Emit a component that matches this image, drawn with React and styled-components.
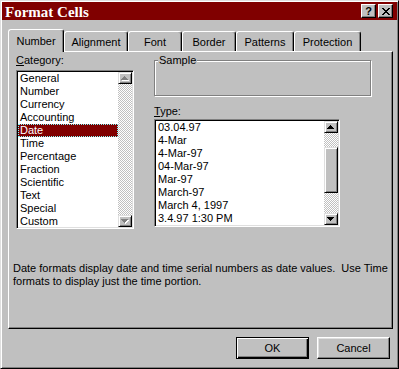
import React from 'react';
import styled, { createGlobalStyle, css } from 'styled-components';

const GlobalStyle = createGlobalStyle`
  html, body {
    margin: 0;
    padding: 0;
    background: #c0c0c0;
  }
  body {
    font-family: "Liberation Sans", Arial, sans-serif;
    font-size: 11px;
    color: #000;
  }
  * {
    box-sizing: border-box;
  }
`;

const raised = css`
  border: 1px solid;
  border-color: #dfdfdf #000 #000 #dfdfdf;
  box-shadow: inset 1px 1px #fff, inset -1px -1px #808080;
`;

const Window = styled.div`
  width: 399px;
  height: 369px;
  padding: 1px;
  background: #c0c0c0;
  display: flex;
  flex-direction: column;
  ${raised}
`;

const TitleBar = styled.div`
  height: 18px;
  background: #800000;
  display: flex;
  align-items: center;
  padding: 0 4px 0 3px;
`;

const Title = styled.div`
  flex: 1;
  color: #fff;
  font-family: "Liberation Serif", "Times New Roman", serif;
  font-weight: bold;
  font-size: 15px;
  line-height: 18px;
  padding-top: 1px;
`;

const CaptionButtons = styled.div`
  display: flex;
  gap: 2px;
`;

const CaptionButton = styled.div`
  width: 15px;
  height: 14px;
  background: #c0c0c0;
  display: flex;
  align-items: center;
  justify-content: center;
  font-family: "Liberation Sans", Arial, sans-serif;
  font-weight: bold;
  font-size: 11px;
  line-height: 1;
  border: 1px solid;
  border-color: #fff #000 #000 #fff;
  box-shadow: inset -1px -1px #808080;
`;

const Body = styled.div`
  flex: 1;
  display: flex;
  flex-direction: column;
  padding: 9px 4px 0 6px;
`;

const TabStrip = styled.div`
  display: flex;
  align-items: flex-end;
  height: 23px;
  margin-bottom: -1px;
  position: relative;
  z-index: 1;
`;

const Tab = styled.div`
  width: ${p => p.$w}px;
  height: ${p => (p.$active ? 23 : 20)}px;
  margin-bottom: ${p => (p.$active ? 0 : 1)}px;
  padding-top: ${p => (p.$active ? 5 : 4)}px;
  background: #c0c0c0;
  border-top: 1px solid #fff;
  border-left: 1px solid #fff;
  border-right: 1px solid #000;
  border-radius: 3px 3px 0 0;
  box-shadow: inset -1px 0 #808080;
  text-align: center;
  line-height: 13px;
  white-space: nowrap;
`;

const Panel = styled.div`
  height: 278px;
  border: 1px solid;
  border-color: #fff #000 #000 #fff;
  box-shadow: inset -1px -1px #808080;
  display: flex;
  flex-direction: column;
`;

const TopSection = styled.div`
  display: flex;
  gap: 20px;
  padding: 2px 0 0 7px;
`;

const Column = styled.div`
  display: flex;
  flex-direction: column;
  width: ${p => p.$w}px;
`;

const Label = styled.div`
  line-height: 13px;
  height: 13px;
  margin-top: ${p => p.$mt || 0}px;
  margin-bottom: ${p => p.$mb || 0}px;
`;

const ListBox = styled.div`
  width: ${p => p.$w}px;
  height: ${p => p.$h}px;
  margin-top: ${p => p.$mt || 0}px;
  padding: 1px;
  background: #fff;
  display: flex;
  border: 1px solid;
  border-color: #808080 #fff #fff #808080;
  box-shadow: inset 1px 1px #000, inset -1px -1px #dfdfdf;
`;

const Items = styled.div`
  flex: 1;
  overflow: hidden;
`;

const Item = styled.div`
  height: 13px;
  line-height: 13px;
  padding-left: 2px;
  white-space: nowrap;
  ${p =>
    p.$selected &&
    css`
      background: #800000;
      color: #fff;
      outline: 1px dotted #7fffff;
      outline-offset: -1px;
    `}
`;

const ScrollBar = styled.div`
  width: 14px;
  display: flex;
  flex-direction: column;
`;

const ScrollButton = styled.div`
  height: 12px;
  flex: none;
  background: #c0c0c0;
  display: flex;
  align-items: center;
  justify-content: center;
  ${raised}
`;

const Track = styled.div`
  flex: 1;
  background-color: #c0c0c0;
  background-image: conic-gradient(#fff 25%, #c0c0c0 0 50%, #fff 0 75%, #c0c0c0 0);
  background-size: 2px 2px;
`;

const Thumb = styled.div`
  height: ${p => p.$h}px;
  margin-top: ${p => p.$top}px;
  background: #c0c0c0;
  ${raised}
`;

const GroupBox = styled.fieldset`
  margin: 0;
  padding: 0;
  min-width: 0;
  border: 1px solid #808080;
  box-shadow: inset 1px 1px #fff, 1px 1px #fff;
`;

const Legend = styled.legend`
  margin-left: 3px;
  padding: 0 1px;
  line-height: 13px;
  background: #c0c0c0;
`;

const SampleArea = styled.div`
  height: 28px;
`;

const Description = styled.p`
  margin: 33px 0 0 4px;
  line-height: 13px;
  white-space: pre;
`;

const ButtonRow = styled.div`
  display: flex;
  justify-content: flex-end;
  gap: 8px;
  margin: 8px 3px 0 0;
`;

const PushButton = styled.button`
  width: 73px;
  height: 22px;
  padding: 0;
  background: #c0c0c0;
  color: #000;
  font-family: "Liberation Sans", Arial, sans-serif;
  font-size: 11px;
  border: 1px solid;
  border-color: #fff #000 #000 #fff;
  box-shadow: inset -1px -1px #808080, inset 1px 1px #dfdfdf;
  ${p =>
    p.$default &&
    css`
      border-color: #000;
      box-shadow: inset 1px 1px #fff, inset -1px -1px #000, inset -2px -2px #808080;
    `}
`;

const CloseGlyph = () => (
  <svg width="8" height="7" viewBox="0 0 8 7" shapeRendering="crispEdges">
    <path
      fill="#000"
      d="M0 0h2v1H0z M6 0h2v1H6z M1 1h2v1H1z M5 1h2v1H5z M2 2h4v1H2z M3 3h2v1H3z M2 4h4v1H2z M1 5h2v1H1z M5 5h2v1H5z M0 6h2v1H0z M6 6h2v1H6z"
    />
  </svg>
);

const Arrow = ({ down, disabled }) => {
  const d = down
    ? 'M0 0h7v1H0z M1 1h5v1H1z M2 2h3v1H2z M3 3h1v1H3z'
    : 'M3 0h1v1H3z M2 1h3v1H2z M1 2h5v1H1z M0 3h7v1H0z';
  return (
    <svg width="8" height="5" viewBox="0 0 8 5" shapeRendering="crispEdges">
      {disabled && <path fill="#fff" d={d} transform="translate(1 1)" />}
      <path fill={disabled ? '#808080' : '#000'} d={d} />
    </svg>
  );
};

const tabs = [
  { label: 'Number', w: 56, active: true },
  { label: 'Alignment', w: 64 },
  { label: 'Font', w: 54 },
  { label: 'Border', w: 54 },
  { label: 'Patterns', w: 58 },
  { label: 'Protection', w: 67 },
];

const categories = [
  'General',
  'Number',
  'Currency',
  'Accounting',
  'Date',
  'Time',
  'Percentage',
  'Fraction',
  'Scientific',
  'Text',
  'Special',
  'Custom',
];

const types = [
  '03.04.97',
  '4-Mar',
  '4-Mar-97',
  '04-Mar-97',
  'Mar-97',
  'March-97',
  'March 4, 1997',
  '3.4.97 1:30 PM',
];

const App = () => (
  <>
    <GlobalStyle />
    <Window>
      <TitleBar>
        <Title>Format Cells</Title>
        <CaptionButtons>
          <CaptionButton>?</CaptionButton>
          <CaptionButton>
            <CloseGlyph />
          </CaptionButton>
        </CaptionButtons>
      </TitleBar>
      <Body>
        <TabStrip>
          {tabs.map(t => (
            <Tab key={t.label} $w={t.w} $active={t.active}>
              {t.label}
            </Tab>
          ))}
        </TabStrip>
        <Panel>
          <TopSection>
            <Column $w={118}>
              <Label $mb={3}>
                <u>C</u>ategory:
              </Label>
              <ListBox $w={118} $h={159}>
                <Items>
                  {categories.map(c => (
                    <Item key={c} $selected={c === 'Date'}>
                      {c}
                    </Item>
                  ))}
                </Items>
                <ScrollBar>
                  <ScrollButton>
                    <Arrow disabled />
                  </ScrollButton>
                  <Track />
                  <ScrollButton>
                    <Arrow down disabled />
                  </ScrollButton>
                </ScrollBar>
              </ListBox>
            </Column>
            <Column $w={217}>
              <GroupBox>
                <Legend>Sample</Legend>
                <SampleArea />
              </GroupBox>
              <Label $mt={9}>
                <u>T</u>ype:
              </Label>
              <ListBox $w={186} $h={108} $mt={1}>
                <Items>
                  {types.map(t => (
                    <Item key={t}>{t}</Item>
                  ))}
                </Items>
                <ScrollBar>
                  <ScrollButton>
                    <Arrow />
                  </ScrollButton>
                  <Track>
                    <Thumb $top={14} $h={46} />
                  </Track>
                  <ScrollButton>
                    <Arrow down />
                  </ScrollButton>
                </ScrollBar>
              </ListBox>
            </Column>
          </TopSection>
          <Description>
            {'Date formats display date and time serial numbers as date values.  Use Time\nformats to display just the time portion.'}
          </Description>
        </Panel>
        <ButtonRow>
          <PushButton $default>OK</PushButton>
          <PushButton>Cancel</PushButton>
        </ButtonRow>
      </Body>
    </Window>
  </>
);

export default App;
